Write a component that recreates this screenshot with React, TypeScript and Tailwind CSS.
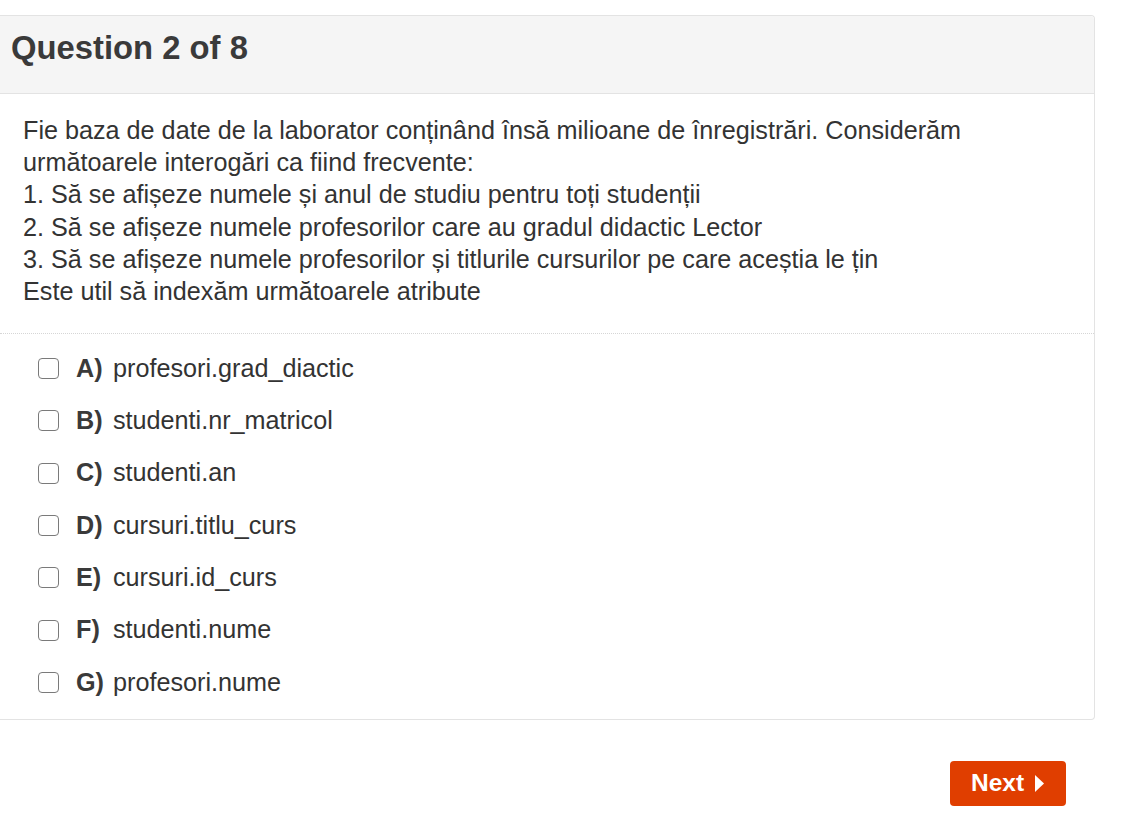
import React from "react";

const options = [
  ["A)", "profesori.grad_diactic"],
  ["B)", "studenti.nr_matricol"],
  ["C)", "studenti.an"],
  ["D)", "cursuri.titlu_curs"],
  ["E)", "cursuri.id_curs"],
  ["F)", "studenti.nume"],
  ["G)", "profesori.nume"],
];

export default function App() {
  return (
    <div
      className="w-[1128px] h-[826px] bg-white text-[#333333] pt-[15px]"
      style={{ fontFamily: '"Liberation Sans", Arial, sans-serif' }}
    >
      <div className="w-[1095px] border border-l-0 border-[#e3e3e3] rounded-r-[4px] bg-white">
        <div className="h-[78px] bg-[#f5f5f5] border-b border-[#e3e3e3] pl-[11px] pt-[14px] rounded-tr-[4px]">
          <h3 className="text-[32.8px] leading-[36px] font-bold text-[#3a3a3a]">Question 2 of 8</h3>
        </div>
        <div className="pl-[23px] pr-4 pt-[20px] pb-[26px] border-b border-dotted border-[#d6d6d6] text-[25.2px] leading-[32.2px] text-[#333333]">
          <p>Fie baza de date de la laborator conținând însă milioane de înregistrări. Considerăm</p>
          <p>următoarele interogări ca fiind frecvente:</p>
          <p>1. Să se afișeze numele și anul de studiu pentru toți studenții</p>
          <p>2. Să se afișeze numele profesorilor care au gradul didactic Lector</p>
          <p>3. Să se afișeze numele profesorilor și titlurile cursurilor pe care aceștia le țin</p>
          <p>Este util să indexăm următoarele atribute</p>
        </div>
        <div className="pl-[38px] pt-[8px] pb-[10px] flex flex-col">
          {options.map(([l, t]) => (
            <label key={l} className="h-[52.4px] flex items-center">
              <span className="w-[21px] h-[21px] border-[1.5px] border-[#7a7a7a] rounded-[4px] bg-white shrink-0" />
              <span className="ml-[17px] w-[37px] text-[25.2px] font-bold text-[#3a3a3a]">{l}</span>
              <span className="text-[25.2px] text-[#333333]">{t}</span>
            </label>
          ))}
        </div>
      </div>
      <div className="w-[1095px] flex justify-end pr-[29px] mt-[41px]">
        <button className="w-[116px] h-[45px] bg-[#e03e00] rounded-[4px] flex items-center justify-center gap-[11px] text-white text-[24.5px] font-bold">
          <span>Next</span>
          <svg width="10" height="17" viewBox="0 0 10 17">
            <path d="M0 0 L9 8.5 L0 17 Z" fill="white" />
          </svg>
        </button>
      </div>
    </div>
  );
}
